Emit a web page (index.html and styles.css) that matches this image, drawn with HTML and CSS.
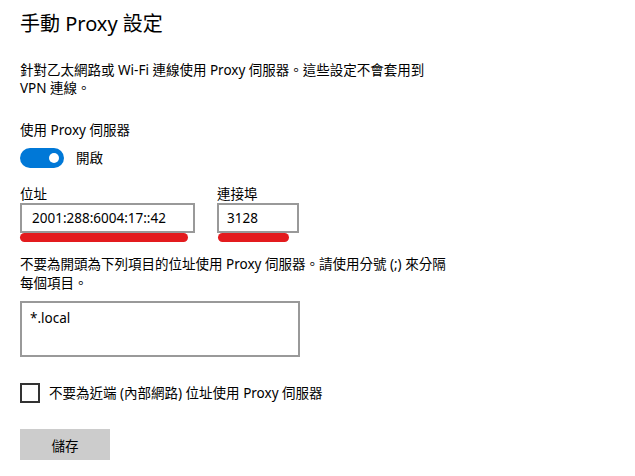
FILE: index.html
```html
<!DOCTYPE html>
<html lang="zh-Hant">
<head>
<meta charset="utf-8">
<title>手動 Proxy 設定</title>
<link rel="stylesheet" href="styles.css">
</head>
<body>
<main class="page">
  <h1 class="title">手動 Proxy 設定</h1>
  <p class="desc">針對乙太網路或 Wi-Fi 連線使用 Proxy 伺服器。這些設定不會套用到<br>VPN 連線。</p>

  <div class="label use-label">使用 Proxy 伺服器</div>
  <div class="toggle-row">
    <span class="toggle"><span class="knob"></span></span>
    <span class="toggle-text">開啟</span>
  </div>

  <div class="fields">
    <div class="field">
      <div class="field-label">位址</div>
      <div class="input input-addr">2001:288:6004:17::42<span class="mark mark-addr"></span></div>
    </div>
    <div class="field">
      <div class="field-label">連接埠</div>
      <div class="input input-port">3128<span class="mark mark-port"></span></div>
    </div>
  </div>

  <p class="bypass">不要為開頭為下列項目的位址使用 Proxy 伺服器。請使用分號 (;) 來分隔<br>每個項目。</p>
  <div class="textarea">*.local</div>

  <div class="check-row">
    <span class="checkbox"></span>
    <span class="check-text">不要為近端 (內部網路) 位址使用 Proxy 伺服器</span>
  </div>

  <button class="save">儲存</button>
</main>
</body>
</html>
```

FILE: styles.css
```css
html, body {
  margin: 0;
  padding: 0;
  background: #ffffff;
}
body {
  font-family: "Noto Sans", "Noto Sans CJK TC", sans-serif;
  color: #000;
  font-size: 14px;
}
.page {
  display: flex;
  flex-direction: column;
  align-items: flex-start;
  padding: 10px 20px;
}
.title {
  margin: 0;
  font-size: 20px;
  font-weight: 400;
  line-height: 28px;
}
.desc {
  margin: 23px 0 0;
  font-size: 13.5px;
  line-height: 18px;
}
.use-label {
  margin-top: 23px;
  font-size: 13.5px;
  line-height: 20px;
}
.toggle-row {
  margin-top: 8px;
  display: flex;
  align-items: center;
  gap: 12px;
  height: 20px;
}
.toggle {
  width: 44px;
  height: 20px;
  border-radius: 10px;
  background: #0078d7;
  display: flex;
  align-items: center;
  justify-content: flex-end;
  padding-right: 5px;
  box-sizing: border-box;
}
.knob {
  width: 10px;
  height: 10px;
  border-radius: 50%;
  background: #fff;
}
.toggle-text {
  font-size: 13.5px;
  line-height: 20px;
}
.fields {
  margin-top: 17px;
  display: flex;
  gap: 22px;
}
.field-label {
  font-size: 13.5px;
  line-height: 18px;
}
.input {
  position: relative;
  box-sizing: border-box;
  height: 30px;
  border: 2px solid #999999;
  padding-left: 10px;
  font-size: 13.5px;
  line-height: 26px;
}
.input-addr { width: 175px; }
.input-port { width: 82px; padding-left: 8px; }
.mark {
  position: absolute;
  top: 28px;
  height: 9px;
  border-radius: 5px;
  background: #e31b1e;
}
.mark-addr { left: -2px; width: 168px; }
.mark-port { left: -1px; width: 71px; }
.bypass {
  margin: 22px 0 0;
  font-size: 13.5px;
  line-height: 19px;
}
.textarea {
  margin-top: 8px;
  box-sizing: border-box;
  width: 280px;
  height: 56px;
  border: 2px solid #999999;
  padding: 5px 8px;
  font-size: 13.5px;
  line-height: 20px;
}
.check-row {
  margin-top: 26px;
  display: flex;
  align-items: center;
  gap: 9px;
}
.checkbox {
  box-sizing: border-box;
  width: 20px;
  height: 20px;
  border: 2px solid #333333;
}
.check-text {
  font-size: 13.5px;
  line-height: 20px;
}
.save {
  margin-top: 26px;
  width: 90px;
  height: 31px;
  border: none;
  background: #cccccc;
  font-family: inherit;
  font-size: 13.5px;
  color: #000;
  padding: 0;
}
```
